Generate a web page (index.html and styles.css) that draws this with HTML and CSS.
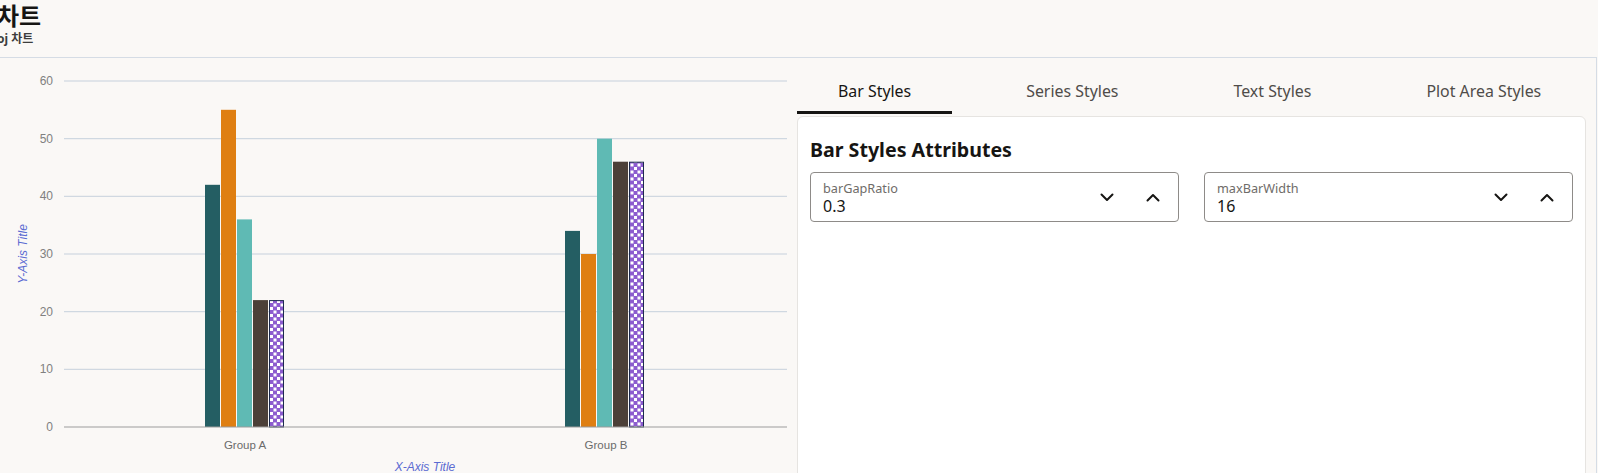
FILE: index.html
```html
<!DOCTYPE html>
<html lang="ko">
<head>
<meta charset="utf-8">
<title>차트</title>
<link rel="stylesheet" href="styles.css">
</head>
<body>
<header class="header">
  <h1 class="title">차트</h1>
  <div class="subtitle">oj 차트</div>
</header>
<main class="main">
  <section class="chart">
    <svg class="chart-svg" width="797" height="415" viewBox="0 0 797 415" xmlns="http://www.w3.org/2000/svg">
      <defs>
        <pattern id="chk" width="7" height="7" patternUnits="userSpaceOnUse">
          <rect width="7" height="7" fill="#8d5ccf"/>
          <rect x="0.5" y="0.5" width="3" height="3" fill="#ffffff"/>
          <rect x="4" y="4" width="3" height="3" fill="#ffffff"/>
        </pattern>
      </defs>
      <g class="grid">
        <line x1="64" y1="23" x2="787" y2="23"/>
        <line x1="64" y1="80.7" x2="787" y2="80.7"/>
        <line x1="64" y1="138.3" x2="787" y2="138.3"/>
        <line x1="64" y1="196" x2="787" y2="196"/>
        <line x1="64" y1="253.7" x2="787" y2="253.7"/>
        <line x1="64" y1="311.3" x2="787" y2="311.3"/>
      </g>
      <g class="ylab">
        <text x="53" y="27">60</text>
        <text x="53" y="84.7">50</text>
        <text x="53" y="142.3">40</text>
        <text x="53" y="200">30</text>
        <text x="53" y="257.7">20</text>
        <text x="53" y="315.3">10</text>
        <text x="53" y="373">0</text>
      </g>
      <text class="axis-title" transform="translate(27 196) rotate(-90)">Y-Axis Title</text>
      <g>
        <rect x="205" y="126.8" width="15" height="242.2" fill="#245e63"/>
        <rect x="221" y="51.8" width="15" height="317.2" fill="#df7f12"/>
        <rect x="237" y="161.4" width="15" height="207.6" fill="#5fbab4"/>
        <rect x="253" y="242.1" width="15" height="126.9" fill="#4c4038"/>
        <rect x="269.5" y="242.6" width="14" height="126.4" fill="url(#chk)" stroke="#1c2a4d" stroke-width="1"/>
        <rect x="565" y="172.9" width="15" height="196.1" fill="#245e63"/>
        <rect x="581" y="196" width="15" height="173" fill="#df7f12"/>
        <rect x="597" y="80.7" width="15" height="288.3" fill="#5fbab4"/>
        <rect x="613" y="103.7" width="15" height="265.3" fill="#4c4038"/>
        <rect x="629.5" y="104.2" width="14" height="264.8" fill="url(#chk)" stroke="#1c2a4d" stroke-width="1"/>
      </g>
      <line class="baseline" x1="64" y1="369" x2="787" y2="369"/>
      <g class="xlab">
        <text x="245" y="391">Group A</text>
        <text x="606" y="391">Group B</text>
      </g>
      <text class="axis-title" x="425" y="413" text-anchor="middle">X-Axis Title</text>
    </svg>
  </section>
  <section class="panel">
    <nav class="tabs">
      <div class="tab active">Bar Styles</div>
      <div class="tab">Series Styles</div>
      <div class="tab">Text Styles</div>
      <div class="tab">Plot Area Styles</div>
    </nav>
    <div class="card">
      <h2 class="card-title">Bar Styles Attributes</h2>
      <div class="fields">
        <div class="field">
          <div class="field-text">
            <div class="field-label">barGapRatio</div>
            <div class="field-value">0.3</div>
          </div>
          <div class="field-btns">
            <span class="btn"><svg width="14" height="9" viewBox="0 0 14 9"><polyline points="1.5,1.5 7,7 12.5,1.5"/></svg></span>
            <span class="btn"><svg width="14" height="9" viewBox="0 0 14 9"><polyline points="1.5,7.5 7,2 12.5,7.5"/></svg></span>
          </div>
        </div>
        <div class="field">
          <div class="field-text">
            <div class="field-label">maxBarWidth</div>
            <div class="field-value">16</div>
          </div>
          <div class="field-btns">
            <span class="btn"><svg width="14" height="9" viewBox="0 0 14 9"><polyline points="1.5,1.5 7,7 12.5,1.5"/></svg></span>
            <span class="btn"><svg width="14" height="9" viewBox="0 0 14 9"><polyline points="1.5,7.5 7,2 12.5,7.5"/></svg></span>
          </div>
        </div>
      </div>
    </div>
  </section>
</main>
</body>
</html>
```

FILE: styles.css
```css
html, body {
  margin: 0;
  padding: 0;
}
body {
  width: 1598px;
  height: 473px;
  overflow: hidden;
  background: #faf8f6;
  font-family: "Noto Sans", Lato, "Noto Sans CJK KR", sans-serif;
  color: #161513;
}
.header {
  height: 57px;
  padding-top: 3px;
  box-sizing: border-box;
}
.title {
  margin: 0 0 0 -3px;
  font: 700 24px/26px Lato, "Noto Sans CJK KR", sans-serif;
  color: #161513;
}
.subtitle {
  margin: 3px 0 0 -3px;
  font: 700 12px/14px "Noto Sans", "Noto Sans CJK KR", sans-serif;
  color: #3d3d3d;
}
.main {
  display: flex;
  width: 1597px;
  height: 416px;
  box-sizing: border-box;
  border-top: 1px solid #d5dce5;
  border-right: 1px solid #d5dce5;
  overflow: hidden;
}
.chart {
  flex: none;
  width: 797px;
}
.chart-svg {
  display: block;
}
.grid line {
  stroke: #c6d0dc;
  stroke-width: 1;
}
.baseline {
  stroke: #9c9c9c;
  stroke-width: 1.2;
}
.ylab text {
  font: 12px "Liberation Sans", sans-serif;
  fill: #808080;
  text-anchor: end;
}
.xlab text {
  font: 11.5px "Liberation Sans", sans-serif;
  fill: #6b6b6b;
  text-anchor: middle;
}
.axis-title {
  font: italic 12px "Liberation Sans", sans-serif;
  fill: #5b6bd2;
  text-anchor: middle;
}
.panel {
  flex: 1;
  display: flex;
  flex-direction: column;
  padding-right: 10px;
}
.tabs {
  display: flex;
  gap: 33px;
  height: 56px;
}
.tab {
  height: 56px;
  box-sizing: border-box;
  padding: 12px 41px 0;
  display: flex;
  align-items: center;
  border-bottom: 3px solid transparent;
  font-size: 15.9px;
  color: #4f4c49;
  white-space: nowrap;
}
.tab.active {
  color: #161513;
  border-bottom-color: #161513;
}
.card {
  margin-top: 2px;
  height: 400px;
  flex: none;
  background: #ffffff;
  border: 1px solid #e6e4e1;
  border-radius: 6px;
  padding: 21px 12px 0;
}
.card-title {
  margin: 0;
  font: 700 19.6px/24px "Noto Sans", Lato, sans-serif;
  color: #161513;
}
.fields {
  margin-top: 10px;
  display: grid;
  grid-template-columns: 1fr 1fr;
  gap: 25px;
}
.field {
  height: 50px;
  box-sizing: border-box;
  border: 1px solid #8e8b88;
  border-radius: 4px;
  display: flex;
  align-items: center;
}
.field-text {
  flex: 1;
  padding: 3px 0 0 12px;
}
.field-label {
  font-size: 12.7px;
  line-height: 15px;
  color: #6f6c69;
}
.field-value {
  font-size: 16px;
  line-height: 20px;
  color: #161513;
}
.field-btns {
  display: flex;
  padding-right: 2px;
}
.btn {
  width: 46px;
  height: 40px;
  display: flex;
  align-items: center;
  justify-content: center;
}
.btn polyline {
  fill: none;
  stroke: #161513;
  stroke-width: 2;
  stroke-linecap: round;
  stroke-linejoin: round;
}
```
